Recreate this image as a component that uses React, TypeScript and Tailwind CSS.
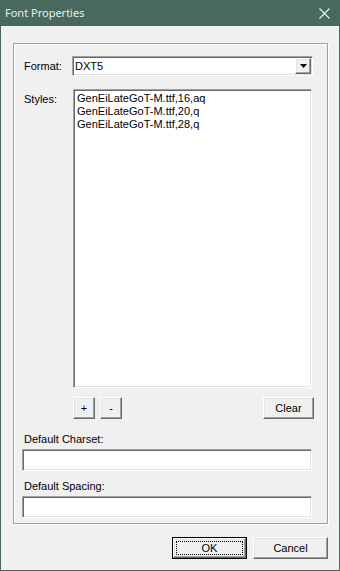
import React from 'react';

const styles = ['GenEiLateGoT-M.ttf,16,aq', 'GenEiLateGoT-M.ttf,20,q', 'GenEiLateGoT-M.ttf,28,q'];

// classic 3D borders
const sunken =
  'bg-white border border-t-[#a0a0a0] border-l-[#a0a0a0] border-b-white border-r-white shadow-[inset_1px_1px_0_#696969,inset_-1px_-1px_0_#e3e3e3]';
const raised =
  'bg-[#f0f0f0] border border-t-white border-l-white border-b-[#696969] border-r-[#696969] shadow-[inset_-1px_-1px_0_#a0a0a0,inset_1px_1px_0_#e3e3e3]';

function Button({ label, className = '' }: { label: string; className?: string }) {
  return (
    <button className={`${raised} h-[22px] flex items-center justify-center text-[11px] text-black ${className}`}>
      {label}
    </button>
  );
}

export default function App() {
  return (
    <div
      className="w-[340px] h-[571px] flex flex-col bg-[#486a5e] text-black"
      style={{ fontFamily: '"Liberation Sans", Arial, sans-serif' }}
    >
      {/* Title bar */}
      <div className="h-[26px] flex items-center justify-between pl-[5px] pr-[10px] shrink-0">
        <span className="text-[11px] text-[#e8eeeb]" style={{ fontFamily: '"Noto Sans", sans-serif' }}>
          Font Properties
        </span>
        <svg width="11" height="11" viewBox="0 0 11 11" className="mt-[1px]">
          <path d="M0.5 0.5 L10.5 10.5 M10.5 0.5 L0.5 10.5" stroke="#f0f4f2" strokeWidth="1.1" />
        </svg>
      </div>

      {/* Body */}
      <div className="flex-1 mx-[1px] mb-[1px] bg-[#f0f0f0] flex flex-col pt-[17px] pl-[12px] pr-[10px]">
        {/* Group box */}
        <div className="w-[315px] h-[481px] border border-[#a0a0a0] shadow-[inset_1px_1px_0_#fff,1px_1px_0_#fff] flex flex-col pt-[12px] pl-[8px] pr-[15px]">
          {/* Format */}
          <div className="flex items-center h-[20px]">
            <span className="w-[50px] pl-[2px] text-[11px]">Format:</span>
            <div className={`${sunken} flex-1 h-[20px] flex items-center justify-between pl-[2px] pr-[1px] -mr-[1px]`}>
              <span className="text-[11px]">DXT5</span>
              <div className={`${raised} w-[16px] h-[16px] flex items-center justify-center`}>
                <svg width="7" height="4" viewBox="0 0 7 4">
                  <path d="M0 0 H7 L3.5 4 Z" fill="#000" />
                </svg>
              </div>
            </div>
          </div>

          {/* Styles */}
          <div className="flex mt-[13px]">
            <span className="w-[51px] pl-[2px] pt-[2px] text-[11px]">Styles:</span>
            <div className={`${sunken} flex-1 h-[299px] pt-[2px] pl-[3px]`}>
              {styles.map((s) => (
                <div key={s} className="text-[11px] leading-[13px]">
                  {s}
                </div>
              ))}
            </div>
          </div>

          {/* List buttons */}
          <div className="flex mt-[9px] pl-[51px] -mr-[2px]">
            <Button label="+" className="w-[22px]" />
            <Button label="-" className="w-[22px] ml-[5px]" />
            <Button label="Clear" className="w-[51px] ml-auto" />
          </div>

          {/* Default Charset */}
          <span className="mt-[14px] pl-[2px] text-[11px] leading-[13px]">Default Charset:</span>
          <div className={`${sunken} h-[22px] mt-[3px]`} />

          {/* Default Spacing */}
          <span className="mt-[9px] pl-[2px] text-[11px] leading-[13px]">Default Spacing:</span>
          <div className={`${sunken} h-[22px] mt-[3px]`} />
        </div>

        {/* Dialog buttons */}
        <div className="flex justify-end gap-[6px] mt-[13px] pr-[1px]">
          <div className="w-[75px] h-[22px] border border-black relative">
            <button className={`${raised} w-full h-full flex items-center justify-center text-[11px]`}>OK</button>
            <div className="absolute inset-[3px] border border-dotted border-black pointer-events-none" />
          </div>
          <Button label="Cancel" className="w-[75px]" />
        </div>
      </div>
    </div>
  );
}
